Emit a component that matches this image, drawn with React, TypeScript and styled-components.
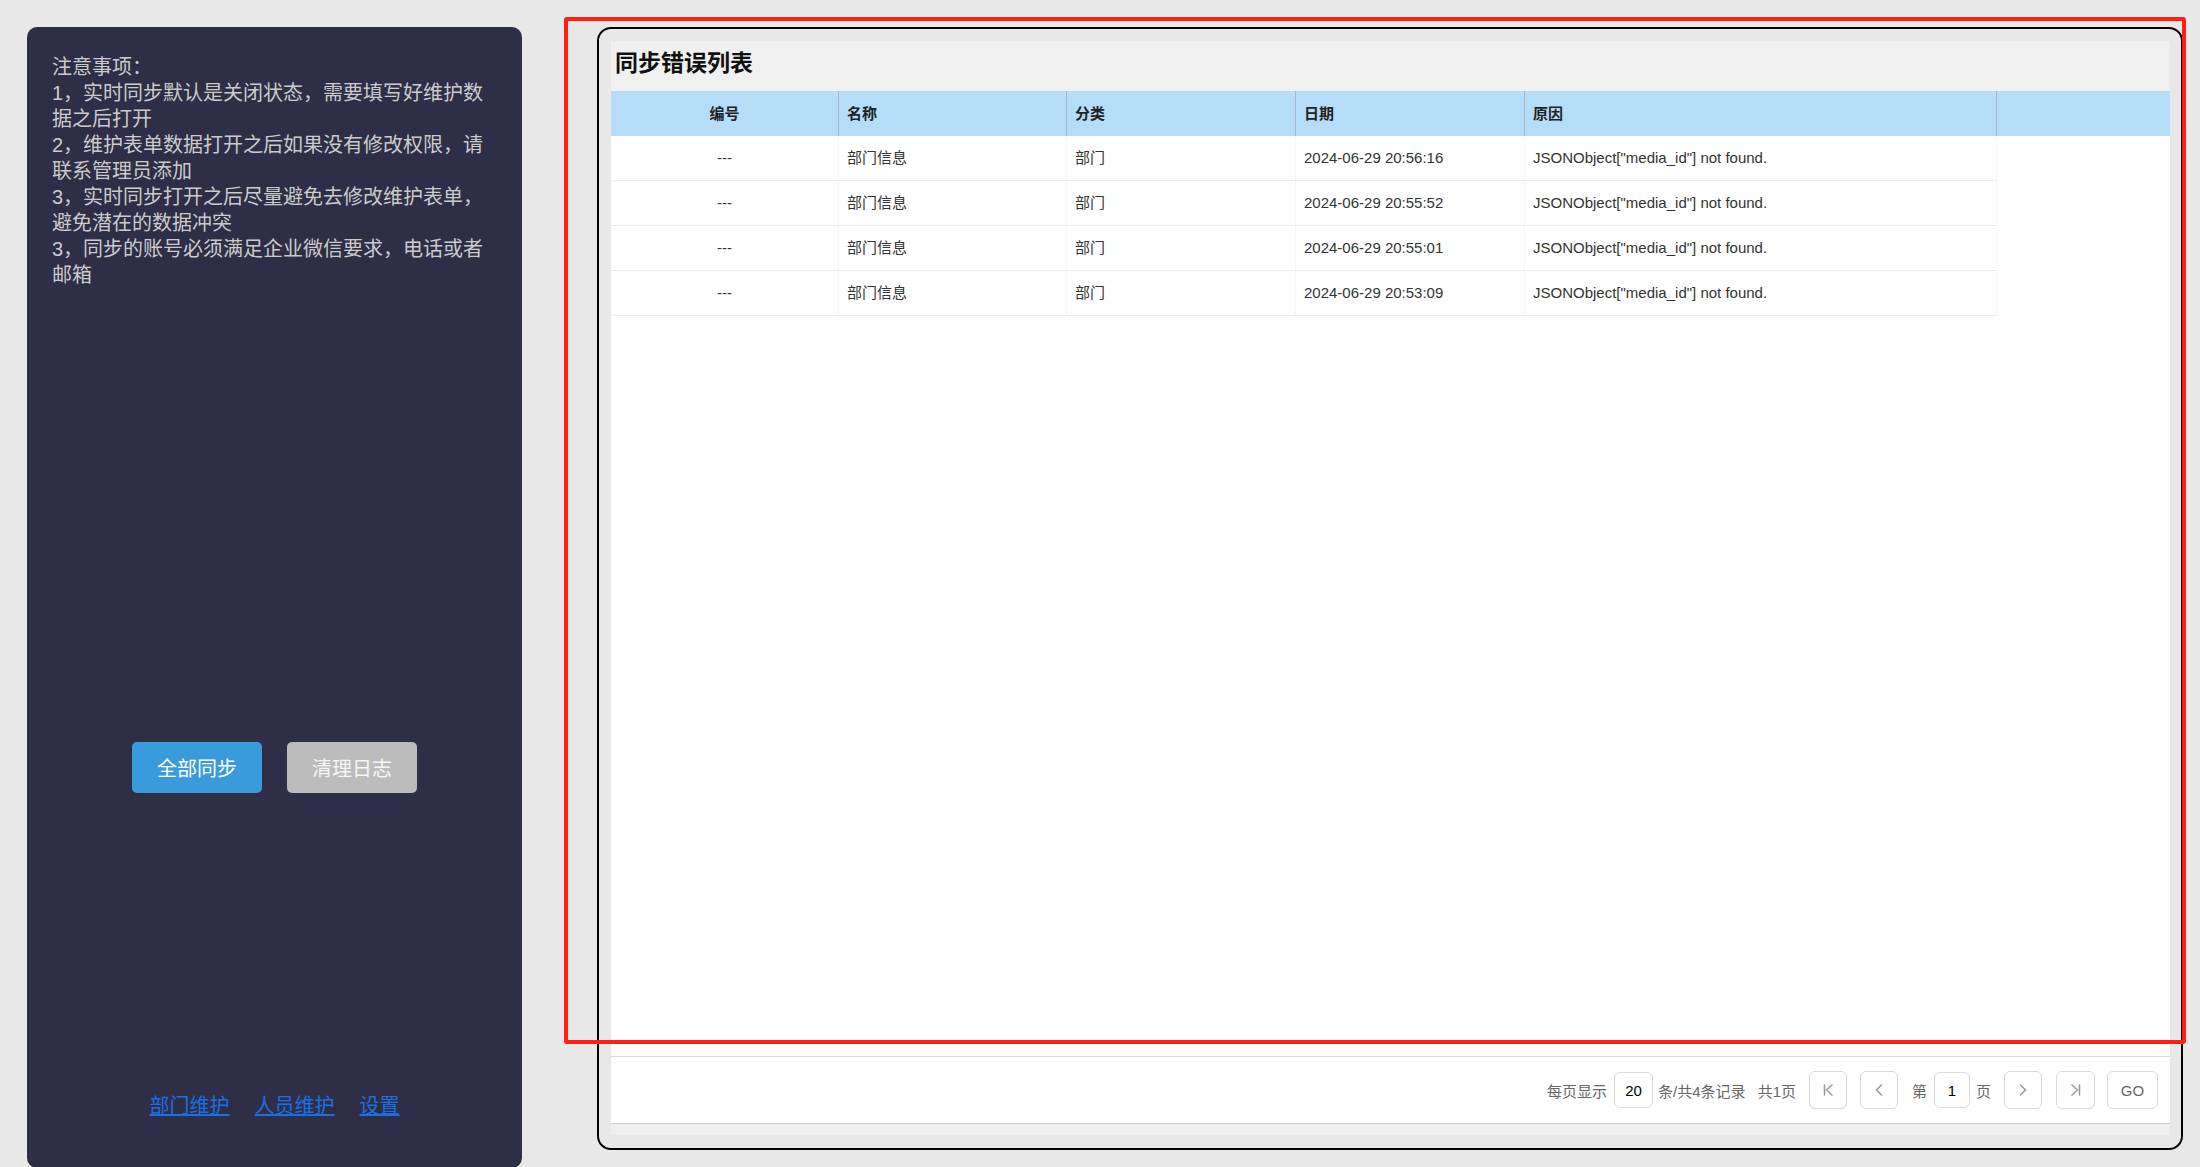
import React from "react";
import styled, { createGlobalStyle } from "styled-components";

const GlobalStyle = createGlobalStyle`
  html, body {
    margin: 0;
    padding: 0;
    background: #e8e8e8;
    overflow: hidden;
  }
  body {
    font-family: "Liberation Sans", "Noto Sans CJK SC", sans-serif;
  }
  * { box-sizing: border-box; }
`;

const Page = styled.div`
  position: relative;
  display: flex;
  align-items: flex-start;
  gap: 75px;
  width: 2200px;
  height: 1167px;
  padding: 27px 17px 0 27px;
`;

const SidePanel = styled.aside`
  width: 495px;
  height: 1141px;
  flex-shrink: 0;
  background: #2e2e47;
  border-radius: 10px;
  padding: 27px 25px 0;
  display: flex;
  flex-direction: column;
`;

const Notice = styled.div`
  font-size: 20px;
  line-height: 26px;
  color: #cbcbcb;
  height: 234px;
`;

const ButtonRow = styled.div`
  display: flex;
  justify-content: center;
  gap: 25px;
  margin-top: 454px;
`;

const ActionButton = styled.button<{ $variant: "primary" | "muted" }>`
  width: 130px;
  height: 51px;
  border: none;
  border-radius: 5px;
  font-family: inherit;
  font-size: 20px;
  color: ${(p) => (p.$variant === "primary" ? "#ffffff" : "#f6f6f6")};
  background: ${(p) => (p.$variant === "primary" ? "#3a9bdc" : "#bcbcbc")};
  cursor: pointer;
`;

const LinkRow = styled.nav`
  display: flex;
  justify-content: center;
  gap: 25px;
  margin-top: 300px;
`;

const NavLink = styled.a`
  font-size: 20px;
  line-height: 26px;
  color: #1a6fe6;
  text-decoration: underline;
  cursor: pointer;
`;

const MainBox = styled.section`
  width: 1586px;
  height: 1123px;
  flex-shrink: 0;
  border: 2px solid #000;
  border-radius: 14px;
  background: #e8e8e8;
  padding: 12px 11px 13px 12px;
  display: flex;
  flex-direction: column;
`;

const Inner = styled.div`
  flex: 1;
  display: flex;
  flex-direction: column;
  background: #fff;
`;

const TitleBar = styled.div`
  height: 50px;
  background: #f0f0f0;
  padding: 6px 4px 0;
  font-size: 23px;
  line-height: 32px;
  font-weight: bold;
  color: #111;
`;

const COLS = "228px 228px 229px 229px 472px";

const HeaderRow = styled.div`
  height: 45px;
  background: #b5ddf7;
  display: grid;
  grid-template-columns: ${COLS} 1fr;
`;

const HeaderCell = styled.div<{ $center?: boolean; $last?: boolean }>`
  padding: 0 8px;
  line-height: 45px;
  font-size: 15px;
  font-weight: bold;
  color: #222;
  text-align: ${(p) => (p.$center ? "center" : "left")};
  border-right: ${(p) => (p.$last ? "none" : "1px solid #a3b4cb")};
`;

const Body = styled.div`
  flex: 1;
  background: #fff;
`;

const Row = styled.div`
  display: grid;
  grid-template-columns: ${COLS};
  width: 1386px;
  height: 45px;
  border-bottom: 1px solid #ebebeb;
`;

const Cell = styled.div<{ $center?: boolean }>`
  padding: 0 8px;
  line-height: 44px;
  font-size: 15px;
  color: #333;
  text-align: ${(p) => (p.$center ? "center" : "left")};
  border-right: 1px solid #f5f5f5;
  white-space: nowrap;
`;

const Footer = styled.div`
  height: 68px;
  border-top: 1px solid #d9d9d9;
  border-bottom: 1px solid #cccccc;
  display: flex;
  align-items: center;
  justify-content: flex-end;
  padding-right: 12px;
  font-size: 15px;
  color: #666;
`;

const BottomStrip = styled.div`
  height: 11px;
  background: #efefef;
`;

const PagerText = styled.span<{ $ml?: number }>`
  margin-left: ${(p) => p.$ml ?? 0}px;
  white-space: nowrap;
`;

const PagerInput = styled.div<{ $w: number; $ml: number }>`
  width: ${(p) => p.$w}px;
  height: 36px;
  margin-left: ${(p) => p.$ml}px;
  border: 1px solid #d9d9d9;
  border-radius: 6px;
  display: flex;
  align-items: center;
  justify-content: center;
  color: #000;
  font-size: 15px;
`;

const PagerButton = styled.button<{ $w: number; $ml: number }>`
  width: ${(p) => p.$w}px;
  height: 38px;
  margin-left: ${(p) => p.$ml}px;
  border: 1px solid #d9d9d9;
  border-radius: 6px;
  background: #fff;
  display: flex;
  align-items: center;
  justify-content: center;
  padding: 0;
  font-family: inherit;
  font-size: 15px;
  color: #666;
  cursor: pointer;
`;

const RedMark = styled.div`
  position: absolute;
  left: 564px;
  top: 17px;
  width: 1622px;
  height: 1027px;
  border: 4px solid #fe1f12;
  border-radius: 3px;
  pointer-events: none;
`;

const Icon = ({ d }: { d: string }) => (
  <svg width="14" height="14" viewBox="0 0 14 14" fill="none" stroke="#9a9a9a" strokeWidth="1.6" strokeLinecap="round" strokeLinejoin="round">
    <path d={d} />
  </svg>
);

const rows = [
  "2024-06-29 20:56:16",
  "2024-06-29 20:55:52",
  "2024-06-29 20:55:01",
  "2024-06-29 20:53:09",
];

export default function App() {
  return (
    <>
      <GlobalStyle />
      <Page>
        <SidePanel>
          <Notice>
            <div>注意事项：</div>
            <div>1，实时同步默认是关闭状态，需要填写好维护数据之后打开</div>
            <div>2，维护表单数据打开之后如果没有修改权限，请联系管理员添加</div>
            <div>3，实时同步打开之后尽量避免去修改维护表单，避免潜在的数据冲突</div>
            <div>3，同步的账号必须满足企业微信要求，电话或者邮箱</div>
          </Notice>
          <ButtonRow>
            <ActionButton $variant="primary">全部同步</ActionButton>
            <ActionButton $variant="muted">清理日志</ActionButton>
          </ButtonRow>
          <LinkRow>
            <NavLink>部门维护</NavLink>
            <NavLink>人员维护</NavLink>
            <NavLink>设置</NavLink>
          </LinkRow>
        </SidePanel>

        <MainBox>
          <Inner>
            <TitleBar>同步错误列表</TitleBar>
            <HeaderRow>
              <HeaderCell $center>编号</HeaderCell>
              <HeaderCell>名称</HeaderCell>
              <HeaderCell>分类</HeaderCell>
              <HeaderCell>日期</HeaderCell>
              <HeaderCell>原因</HeaderCell>
              <HeaderCell $last />
            </HeaderRow>
            <Body>
              {rows.map((date) => (
                <Row key={date}>
                  <Cell $center>---</Cell>
                  <Cell>部门信息</Cell>
                  <Cell>部门</Cell>
                  <Cell>{date}</Cell>
                  <Cell>JSONObject["media_id"] not found.</Cell>
                </Row>
              ))}
            </Body>
            <Footer>
              <PagerText>每页显示</PagerText>
              <PagerInput $w={39} $ml={7}>20</PagerInput>
              <PagerText $ml={5}>条/共4条记录</PagerText>
              <PagerText $ml={12}>共1页</PagerText>
              <PagerButton $w={38} $ml={13}>
                <Icon d="M3.5 2v10M11 2L5.5 7l5.5 5" />
              </PagerButton>
              <PagerButton $w={38} $ml={13}>
                <Icon d="M9.5 2L4.5 7l5 5" />
              </PagerButton>
              <PagerText $ml={14}>第</PagerText>
              <PagerInput $w={36} $ml={7}>1</PagerInput>
              <PagerText $ml={6}>页</PagerText>
              <PagerButton $w={38} $ml={13}>
                <Icon d="M4.5 2l5 5-5 5" />
              </PagerButton>
              <PagerButton $w={39} $ml={14}>
                <Icon d="M10.5 2v10M3 2l5.5 5L3 12" />
              </PagerButton>
              <PagerButton $w={51} $ml={12}>GO</PagerButton>
            </Footer>
            <BottomStrip />
          </Inner>
        </MainBox>
        <RedMark />
      </Page>
    </>
  );
}
